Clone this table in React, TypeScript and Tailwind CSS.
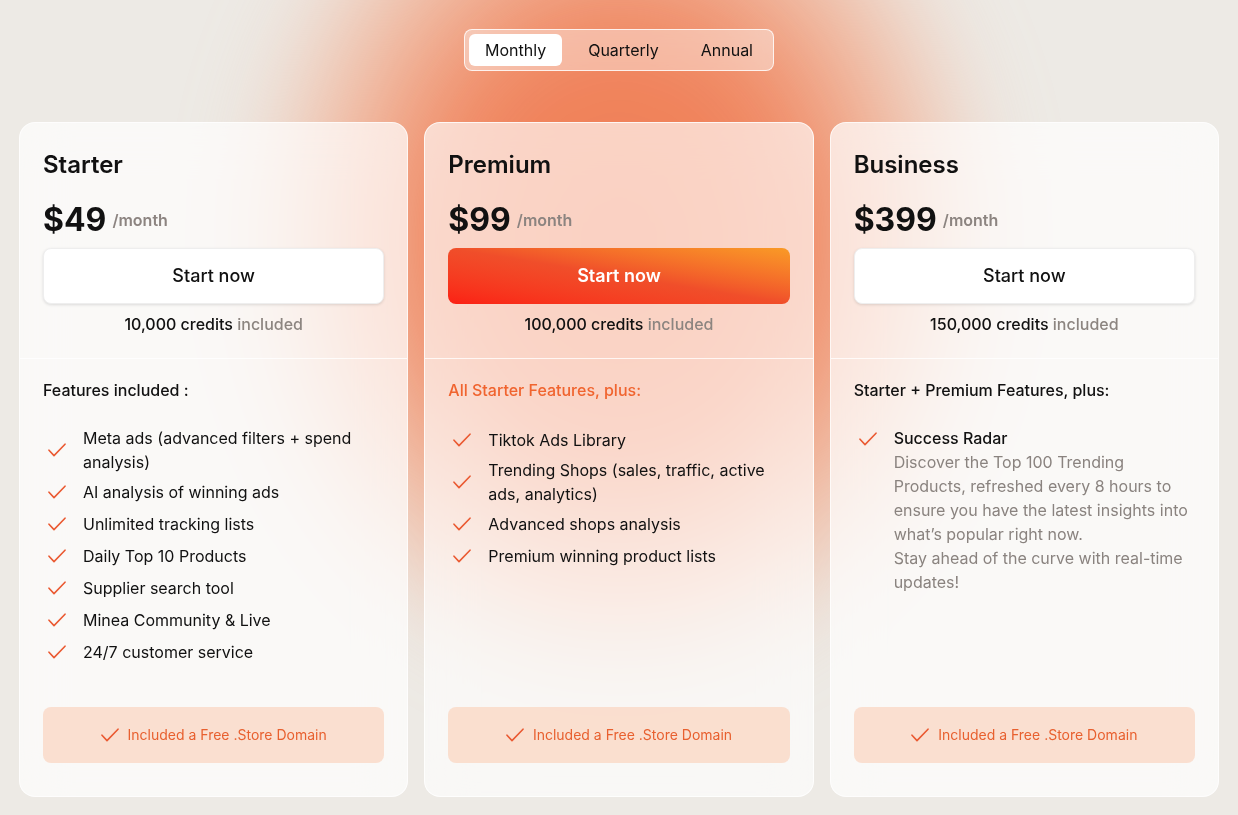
import { useState } from "react"

const font = { fontFamily: "Inter, 'Noto Sans', sans-serif" }

function Check({ className = "" }: { className?: string }) {
  return (
    <svg viewBox="0 0 18 14" width="18" height="14" fill="none" className={className}>
      <path d="M1 7.2 L6 12.6 L17 1.2" stroke="#ea5a32" strokeWidth="1.6" strokeLinecap="round" strokeLinejoin="round" />
    </svg>
  )
}

type Plan = {
  name: string
  price: string
  credits: string
  heading: string
  accent?: boolean
  features: string[]
}

const plans: Plan[] = [
  {
    name: "Starter",
    price: "$49",
    credits: "10,000",
    heading: "Features included :",
    features: [
      "Meta ads (advanced filters + spend analysis)",
      "AI analysis of winning ads",
      "Unlimited tracking lists",
      "Daily Top 10 Products",
      "Supplier search tool",
      "Minea Community & Live",
      "24/7 customer service",
    ],
  },
  {
    name: "Premium",
    price: "$99",
    credits: "100,000",
    heading: "All Starter Features, plus:",
    accent: true,
    features: [
      "Tiktok Ads Library",
      "Trending Shops (sales, traffic, active ads, analytics)",
      "Advanced shops analysis",
      "Premium winning product lists",
    ],
  },
  {
    name: "Business",
    price: "$399",
    credits: "150,000",
    heading: "Starter + Premium Features, plus:",
    features: [],
  },
]

function Card({ plan }: { plan: Plan }) {
  return (
    <div
      className={`flex flex-col rounded-2xl border backdrop-blur-xl pt-[26px] pb-[33px] ${
        plan.accent ? "bg-white/65 border-white/80" : "bg-white/70 border-white/70"
      }`}
    >
      <div className="px-[23px]">
        <h2 className="text-2xl leading-8 font-semibold text-[#111]">{plan.name}</h2>
        <div className="mt-[19px] flex items-center gap-[6px]">
          <span className="text-[32px] leading-10 font-bold text-[#111]">{plan.price}</span>
          <span className="text-base font-semibold text-[#8c8480]">/month</span>
        </div>
        {plan.accent ? (
          <button className="mt-[8px] h-[56px] w-full rounded-lg bg-gradient-to-tr from-[#fb1f14] via-[#f04e2a] to-[#f99a26] text-lg font-semibold text-white">
            Start now
          </button>
        ) : (
          <button className="mt-[8px] h-[56px] w-full rounded-lg bg-white text-lg font-medium text-[#111] shadow-[0_1px_3px_rgba(0,0,0,0.12)] border border-[#eee]">
            Start now
          </button>
        )}
        <p className="mt-[8px] text-center text-base leading-6 font-medium text-[#111]">
          {plan.credits} credits <span className="text-[#8c8580]">included</span>
        </p>
      </div>
      <div className="mt-[22px] h-px bg-white/80" />
      <div className="px-[23px]">
        <p
          className={`mt-[19px] text-base leading-6 font-medium ${
            plan.accent ? "text-[#f0642f]" : "text-[#111]"
          }`}
        >
          {plan.heading}
        </p>
        {plan.features.length > 0 ? (
          <ul className="mt-6 flex flex-col gap-1">
            {plan.features.map((f) => (
              <li key={f} className="flex min-h-[28px] items-center gap-[17px] text-base leading-6 text-[#111]">
                <Check className="ml-[5px] shrink-0" />
                <span className="pr-4">{f}</span>
              </li>
            ))}
          </ul>
        ) : (
          <div className="mt-6 flex items-start gap-[17px] text-base leading-6">
            <Check className="ml-[5px] mt-[6px] shrink-0" />
            <div>
              <p className="font-medium text-[#111]">Success Radar</p>
              <p className="text-[#8a837f]">
                Discover the Top 100 Trending Products, refreshed every 8 hours to ensure you have the latest
                insights into what’s popular right now.
                <br />
                Stay ahead of the curve with real-time updates!
              </p>
            </div>
          </div>
        )}
      </div>
      <div className="mt-auto px-[23px]">
        <div className="flex h-14 items-center justify-center gap-[9px] rounded-lg bg-[#f9dccb]/90 text-sm text-[#e8602f]">
          <Check />
          <span>Included a Free .Store Domain</span>
        </div>
      </div>
    </div>
  )
}

export default function App() {
  const [period, setPeriod] = useState("Monthly")

  return (
    <div className="relative min-h-[815px] overflow-hidden bg-[#edeae5]" style={font}>
      <div className="pointer-events-none absolute left-1/2 top-[-220px] h-[920px] w-[780px] -translate-x-1/2 rounded-full bg-[radial-gradient(ellipse_at_center,rgba(238,120,78,1)_0%,rgba(240,130,90,0.95)_32%,rgba(242,160,125,0.6)_52%,rgba(237,234,229,0)_70%)] blur-2xl" />
      <div className="relative flex flex-col items-center pt-[29px]">
        <div className="flex h-[42px] items-center rounded-lg border border-white/80 bg-white/40 p-1 backdrop-blur">
          {["Monthly", "Quarterly", "Annual"].map((p) => (
            <button
              key={p}
              onClick={() => setPeriod(p)}
              className={`h-8 rounded-md px-4 text-base text-[#111] ${
                period === p ? "bg-white" : ""
              } ${p === "Quarterly" ? "px-[26px]" : ""}`}
            >
              {p}
            </button>
          ))}
        </div>
        <div className="mt-[51px] grid w-full grid-cols-3 gap-4 px-[19px] h-[675px]">
          {plans.map((p) => (
            <Card key={p.name} plan={p} />
          ))}
        </div>
      </div>
    </div>
  )
}
